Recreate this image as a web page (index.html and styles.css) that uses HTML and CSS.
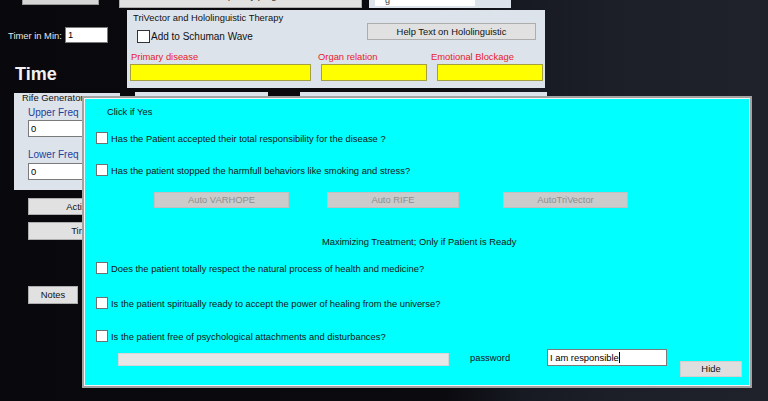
FILE: index.html
```html
<!DOCTYPE html>
<html>
<head>
<meta charset="utf-8">
<link rel="stylesheet" href="styles.css">
</head>
<body>
<div class="screen">
  <div class="left">
    <div class="stub-btn"></div>
    <div class="timer-row"><span class="timer-lbl">Timer in Min:</span><div class="txt timer-in">1</div></div>
    <div class="time-h">Time</div>
    <div class="rife">
      <div class="rife-title">Rife Generator</div>
      <div class="blue-lbl first">Upper Freq</div>
      <div class="txt rife-in first-in">0</div>
      <div class="blue-lbl second">Lower Freq</div>
      <div class="txt rife-in second-in">0</div>
    </div>
    <div class="lbtn act">Activate</div>
    <div class="lbtn tim">Timer</div>
    <div class="lbtn notes">Notes</div>
  </div>

  <div class="main">
    <div class="top-row">
      <div class="wide-btn">Start Frequency program</div>
      <div class="top-box"><div class="top-box-in">g</div></div>
    </div>
    <div class="tri">
      <div class="tri-title">TriVector and Hololinguistic Therapy</div>
      <div class="tri-row">
        <div class="chk-wrap"><span class="chk big"></span><span class="chk-lbl">Add to Schuman Wave</span></div>
        <div class="help-btn">Help Text on Hololinguistic</div>
      </div>
      <div class="fields">
        <div class="red-lbl l1">Primary disease</div>
        <div class="red-lbl l2">Organ relation</div>
        <div class="red-lbl l3">Emotional Blockage</div>
        <div class="yfield"></div>
        <div class="yfield"></div>
        <div class="yfield"></div>
      </div>
    </div>
    <div class="sub-row">
      <div class="sub-box b1">Cycle Generator</div>
      <div class="sub-box b2">Diagnose &nbsp;&nbsp;&nbsp; Disease Hololinguistic</div>
    </div>
  </div>

  <div class="dlg">
    <div class="dlg-title">Click if Yes</div>
    <div class="q q1"><span class="chk"></span><span>Has the Patient accepted their total responsibility for the disease ?</span></div>
    <div class="q q2"><span class="chk"></span><span>Has the patient stopped the harmfull behaviors like smoking and stress?</span></div>
    <div class="auto-row">
      <div class="dis-btn d1">Auto VARHOPE</div>
      <div class="dis-btn d2">Auto RIFE</div>
      <div class="dis-btn d3">AutoTriVector</div>
    </div>
    <div class="max-lbl">Maximizing Treatment; Only if Patient is Ready</div>
    <div class="q q3"><span class="chk"></span><span>Does the patient totally respect the natural process of health and medicine?</span></div>
    <div class="q q4"><span class="chk"></span><span>Is the patient spiritually ready to accept the power of healing from the universe?</span></div>
    <div class="q q5"><span class="chk"></span><span>Is the patient free of psychological attachments and disturbances?</span></div>
    <div class="bottom-row">
      <div class="progress"></div>
      <div class="pw-lbl">password</div>
      <div class="pw-in">I am responsible<span class="caret"></span></div>
      <div class="hide-btn">Hide</div>
    </div>
  </div>
</div>
</body>
</html>
```

FILE: styles.css
```css
* { box-sizing: border-box; }
html, body { margin: 0; padding: 0; }
body { width: 768px; height: 401px; overflow: hidden; }

.screen {
  position: relative;
  width: 768px;
  height: 401px;
  overflow: hidden;
  display: flex;
  align-items: flex-start;
  font-family: "Liberation Sans", Arial, sans-serif;
  font-size: 9.4px;
  color: #111;
  background: linear-gradient(90deg, #09080c 0%, #0b0a0f 58%, #171a22 68%, #1c1f28 80%, #1f222b 100%);
}

/* ---------- left column ---------- */
.left { width: 119px; flex: none; display: flex; flex-direction: column; align-items: flex-start; }
.stub-btn { margin-left: 22px; width: 77px; height: 5px; background: #d6d6d6; border: 1px solid #9a9a9a; border-top: none; }
.timer-row { margin-top: 22px; height: 16px; display: flex; align-items: center; padding-left: 8px; }
.timer-lbl { width: 57px; color: #e6e6e6; }
.txt { background: #fff; border: 1px solid #7a7a7a; padding-left: 2px; line-height: 14px; color: #000; }
.timer-in { width: 43px; height: 16px; }
.time-h { margin-top: 21px; padding-left: 15px; font-size: 18px; font-weight: bold; color: #f2f2f2; line-height: 20px; }
.rife { margin-top: 9px; margin-left: 14px; width: 106px; height: 97px; background: #dde3ea; display: flex; flex-direction: column; }
.rife-title { padding-left: 8px; line-height: 10px; color: #111; white-space: nowrap; }
.blue-lbl { padding-left: 14px; line-height: 12px; color: #23409e; font-size: 10px; }
.blue-lbl.first { margin-top: 4px; }
.blue-lbl.second { margin-top: 12px; }
.rife-in { margin-left: 14px; width: 92px; height: 17px; line-height: 15px; }
.first-in { margin-top: 1px; }
.second-in { margin-top: 2px; }
.lbtn { margin-left: 28px; height: 17px; background: #e1e1e1; border: 1px solid #adadad; text-align: center; line-height: 15px; color: #111; }
.act { margin-top: 8px; width: 110px; }
.tim { margin-top: 7px; width: 110px; height: 18px; line-height: 16px; }
.notes { margin-top: 46px; width: 50px; height: 18px; line-height: 16px; }

/* ---------- main column ---------- */
.main { width: 440px; flex: none; display: flex; flex-direction: column; align-items: flex-start; }
.top-row { display: flex; align-items: flex-start; height: 8px; }
.wide-btn { width: 243px; height: 20px; margin-top: -12px; background: #e1e1e1; border: 1px solid #adadad; text-align: center; line-height: 14px; color: #222; }
.top-box { margin-left: 7px; width: 142px; height: 8px; background: #dde3ea; }
.top-box-in { margin-left: 6px; width: 100px; height: 6px; background: #fff; line-height: 0; font-size: 9px; padding-left: 10px; color: #444; overflow: hidden; }

.tri { margin-top: 2px; margin-left: 8px; width: 418px; height: 78px; background: #dde3ea; display: flex; flex-direction: column; }
.tri-title { margin-top: 2px; padding-left: 6px; line-height: 12px; color: #111; }
.tri-row { margin-top: -1px; height: 20px; display: flex; align-items: flex-start; }
.chk-wrap { margin-top: 7px; margin-left: 10px; display: flex; align-items: center; height: 13px; }
.chk { width: 12px; height: 12px; flex: none; background: #fff; border: 1px solid #707070; }
.chk.big { width: 13px; height: 13px; border-color: #333; }
.chk-lbl { margin-left: 1px; font-size: 10px; color: #111; }
.help-btn { margin-left: auto; margin-right: 9px; width: 169px; height: 17px; background: #e1e1e1; border: 1px solid #adadad; text-align: center; line-height: 15px; color: #111; }
.fields { margin-top: 8px; padding-left: 3px; display: grid; grid-template-columns: 181px 106px 106px; column-gap: 10px; }
.red-lbl { line-height: 12px; color: #e8202c; white-space: nowrap; }
.l1 { margin-left: 1px; }
.l2 { margin-left: -3px; }
.l3 { margin-left: -6px; }
.yfield { margin-top: 1px; height: 17px; background: #ffff00; border: 1px solid #a3a040; }

.sub-row { margin-top: 4px; display: flex; height: 10px; }
.sub-box { height: 10px; background: #dde3ea; color: #222; line-height: 20px; padding-left: 20px; overflow: hidden; white-space: nowrap; }
.b1 { margin-left: 16px; width: 133px; }
.b2 { margin-left: 32px; width: 247px; }

/* ---------- dialog ---------- */
.dlg {
  position: absolute;
  left: 82px;
  top: 96px;
  width: 670px;
  height: 292px;
  border: 2px solid #a2a2a2;
  box-shadow: inset 0 0 0 1px #f4f4f4;
  background: #00ffff;
  padding: 1px;
  display: flex;
  flex-direction: column;
  color: #141414;
}
.dlg-title { height: 26px; line-height: 26px; padding-left: 22px; }
.q { margin-left: 11px; height: 12px; display: flex; align-items: center; gap: 3px; white-space: nowrap; }
.q1 { margin-top: 7px; }
.q2 { margin-top: 20px; }
.q3 { margin-top: 14px; }
.q4 { margin-top: 23px; }
.q5 { margin-top: 21px; }
.auto-row { margin-top: 16px; height: 16px; display: flex; }
.dis-btn { height: 16px; background: #cbcbcb; border: 1px solid #c0c0c0; color: #8e8e8e; text-align: center; line-height: 14px; }
.d1 { margin-left: 69px; width: 135px; }
.d2 { margin-left: 38px; width: 132px; }
.d3 { margin-left: 44px; width: 125px; }
.max-lbl { margin-top: 28px; height: 12px; line-height: 12px; padding-left: 237px; }
.bottom-row { margin-top: 7px; height: 28px; display: flex; align-items: flex-start; }
.progress { margin-left: 33px; margin-top: 4px; width: 331px; height: 13px; background: #e6e6e6; border: 1px solid #d6d6d6; }
.pw-lbl { margin-left: 21px; margin-top: 3px; width: 77px; line-height: 12px; }
.pw-in { width: 120px; height: 17px; background: #fff; border: 1px solid #7a7a7a; padding-left: 2px; line-height: 15px; color: #000; }
.caret { display: inline-block; width: 1px; height: 11px; background: #000; vertical-align: -2px; }
.hide-btn { margin-left: 13px; margin-top: 12px; width: 62px; height: 16px; background: #dedede; border: 1px solid #d0d0d0; text-align: center; line-height: 14px; color: #111; }
```
